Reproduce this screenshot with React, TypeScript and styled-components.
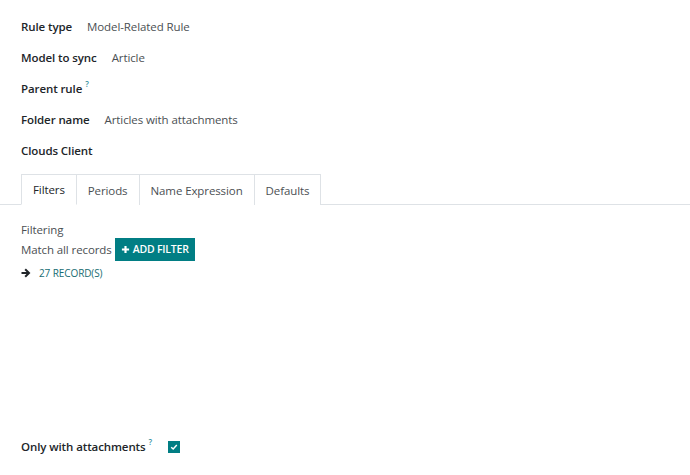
import React from "react";
import styled, { createGlobalStyle } from "styled-components";

const Global = createGlobalStyle`
  html, body { margin: 0; padding: 0; background: #fff; }
  body { font-family: "Open Sans", "Noto Sans", sans-serif; font-size: 11.5px; color: #212529; letter-spacing: -0.1px; }
`;

const Page = styled.div`
  width: 690px;
  height: 475px;
  display: flex;
  flex-direction: column;
  box-sizing: border-box;
  padding-top: 11px;
`;

const Fields = styled.div`
  display: flex;
  flex-direction: column;
  padding-left: 21px;
`;

const FieldRow = styled.div`
  display: flex;
  align-items: center;
  gap: 15px;
  height: 31px;
`;

const Label = styled.span`
  font-weight: 600;
  color: #212529;
  white-space: nowrap;
`;

const Help = styled.sup`
  color: #3a8fa0;
  font-size: 8px;
  font-weight: 600;
  margin-left: 3px;
  vertical-align: 6px;
  line-height: 0;
`;

const Value = styled.span`
  color: #4b4f53;
`;

const TabBar = styled.div`
  display: flex;
  margin-top: 8px;
  padding-left: 21px;
  border-bottom: 1px solid #dee2e6;
  height: 30px;
`;

const Tab = styled.div<{ $active?: boolean }>`
  display: flex;
  align-items: center;
  padding: 0 11px;
  color: ${(p) => (p.$active ? "#212529" : "#4b4f53")};
  border: 1px solid #dee2e6;
  border-bottom: ${(p) => (p.$active ? "1px solid #fff" : "none")};
  border-left: ${(p) => (p.$active ? "1px solid #dee2e6" : "none")};
  margin-bottom: -1px;
  background: #fff;
`;

const Panel = styled.div`
  display: flex;
  flex-direction: column;
  padding: 14px 21px 0;
  flex: 1;
`;

const Line = styled.div`
  display: flex;
  align-items: center;
  color: #4b4f53;
  height: 20px;
`;

const AddButton = styled.button`
  display: inline-flex;
  align-items: center;
  gap: 3px;
  margin-left: 3px;
  height: 23px;
  padding: 0 6px;
  border: none;
  background: #017e84;
  color: #fff;
  font-family: inherit;
  font-size: 10.5px;
  font-weight: 600;
  letter-spacing: -0.2px;
  text-transform: uppercase;
`;

const RecordsLink = styled.div`
  display: flex;
  align-items: center;
  gap: 8px;
  margin-top: 7px;
  color: #176d72;
  font-size: 10px;
  font-weight: 500;
  text-transform: uppercase;
`;

const BottomRow = styled.div`
  display: flex;
  align-items: center;
  gap: 16px;
  padding: 0 0 21px 21px;
`;

const Check = styled.span`
  width: 12px;
  height: 12px;
  background: #017e84;
  display: inline-flex;
  align-items: center;
  justify-content: center;
`;

export default function App() {
  return (
    <>
      <Global />
      <Page>
        <Fields>
          <FieldRow>
            <Label>Rule type</Label>
            <Value>Model-Related Rule</Value>
          </FieldRow>
          <FieldRow>
            <Label>Model to sync</Label>
            <Value>Article</Value>
          </FieldRow>
          <FieldRow>
            <Label>
              Parent rule<Help>?</Help>
            </Label>
          </FieldRow>
          <FieldRow>
            <Label>Folder name</Label>
            <Value>Articles with attachments</Value>
          </FieldRow>
          <FieldRow>
            <Label>Clouds Client</Label>
          </FieldRow>
        </Fields>
        <TabBar>
          <Tab $active>Filters</Tab>
          <Tab>Periods</Tab>
          <Tab>Name Expression</Tab>
          <Tab>Defaults</Tab>
        </TabBar>
        <Panel>
          <Line>Filtering</Line>
          <Line>
            Match all records
            <AddButton>
              <svg width="9" height="9" viewBox="0 0 10 10">
                <path d="M5 1v8M1 5h8" stroke="#fff" strokeWidth="2.4" />
              </svg>
              Add filter
            </AddButton>
          </Line>
          <RecordsLink>
            <svg width="10" height="10" viewBox="0 0 10 10">
              <path d="M0.5 5h7M4.2 1.3 8 5 4.2 8.7" fill="none" stroke="#212529" strokeWidth="2" />
            </svg>
            27 record(s)
          </RecordsLink>
        </Panel>
        <BottomRow>
          <Label>
            Only with attachments<Help>?</Help>
          </Label>
          <Check>
            <svg width="8" height="8" viewBox="0 0 10 10">
              <path d="M1.5 5.2 4 7.5 8.5 2.5" fill="none" stroke="#fff" strokeWidth="1.8" />
            </svg>
          </Check>
        </BottomRow>
      </Page>
    </>
  );
}
